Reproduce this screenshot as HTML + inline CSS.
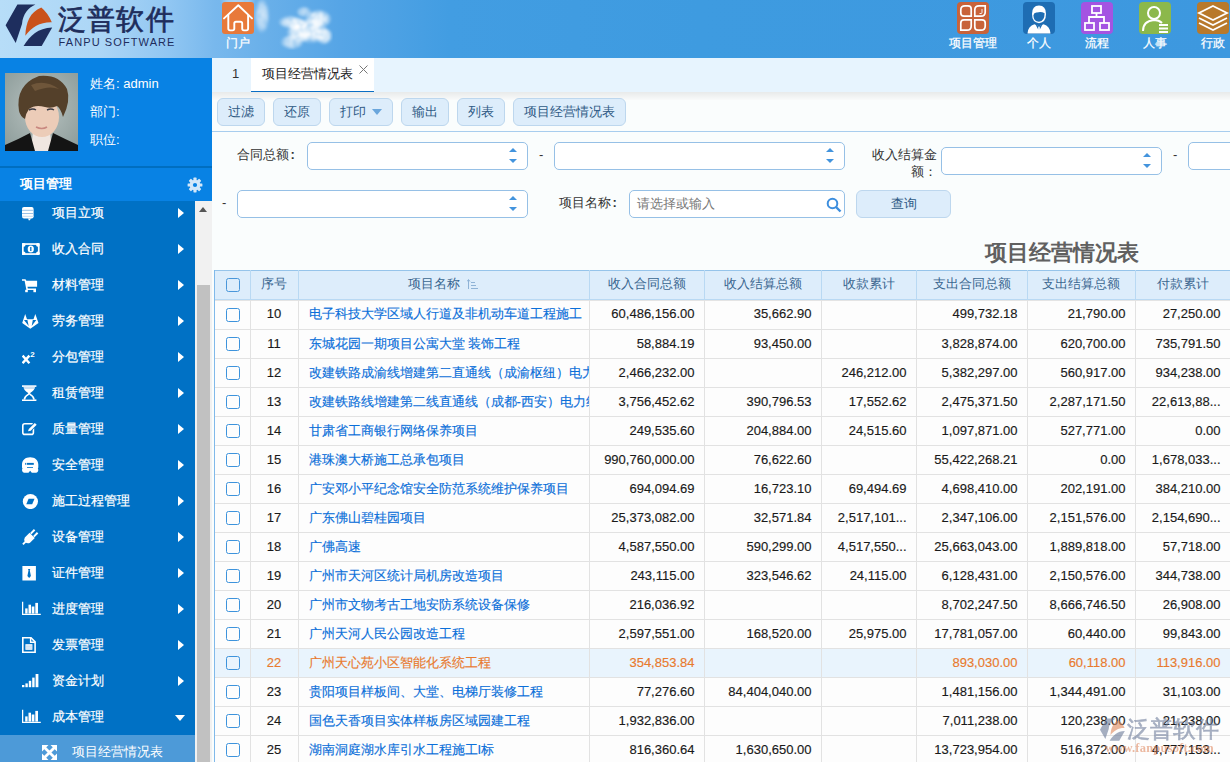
<!DOCTYPE html>
<html><head><meta charset="utf-8">
<style>
*{margin:0;padding:0;box-sizing:border-box}
html,body{width:1230px;height:762px;overflow:hidden;background:#fafdfd;font-family:"Liberation Sans",sans-serif;font-size:13px;color:#333}
.abs{position:absolute}
#hdr{position:absolute;left:0;top:0;width:1230px;height:58px;background:linear-gradient(90deg,#b7ddf8 0px,#acd6f6 100px,#90c6f2 170px,#78b8ed 215px,#68afe9 270px,#56a5e6 340px,#429de2 450px,#3e9be0 700px,#3d98df 1230px)}
.cloud{position:absolute;border-radius:50%;background:rgba(255,255,255,.55);filter:blur(4px)}
.logo-cn{position:absolute;left:58px;top:1px;font-size:28px;line-height:38px;color:#1e2d5c;letter-spacing:1.2px;font-weight:normal;-webkit-text-stroke:0.7px #1e2d5c}
.logo-en{position:absolute;left:58.5px;top:35.5px;font-size:11px;line-height:12px;color:#1e2d5c;letter-spacing:1.1px}
.hi{position:absolute;top:2px;width:32px;height:32px;border-radius:4px}
.ht{position:absolute;top:34.5px;font-size:12px;line-height:16px;color:#fff;text-align:center;width:70px;-webkit-text-stroke:0.25px #fff}
#side{position:absolute;left:0;top:58px;width:212px;height:704px;background:#0882e4}
#user{position:absolute;left:0;top:0;width:212px;height:108px;background:#0882e4}
#photo{position:absolute;left:5px;top:15px;width:73px;height:78px;background:linear-gradient(180deg,#8fa39c,#b3c1bd)}
.ui{position:absolute;left:90px;color:#fff;font-size:13px;line-height:16px}
#sep{position:absolute;left:0;top:108px;width:212px;height:2px;background:#006ec0}
#pm{position:absolute;left:0;top:110px;width:212px;height:33px;background:#0882e4;color:#fff;font-weight:bold;font-size:13px}
#menu{position:absolute;left:0;top:201px;width:195px;height:561px;background:#0071c5;overflow:hidden}
.mi{position:absolute;left:0;width:195px;height:36px;color:#fff}
.mic{position:absolute;left:22px;top:10px;width:18px;height:16px}
.mt{position:absolute;left:52px;top:10px;line-height:16px;font-size:13px;-webkit-text-stroke:0.2px #fff}
.ar{position:absolute;left:178px;top:13px;width:0;height:0;border-left:6px solid #fff;border-top:5px solid transparent;border-bottom:5px solid transparent}
.ad{position:absolute;left:175px;top:16px;width:0;height:0;border-top:6px solid #fff;border-left:5px solid transparent;border-right:5px solid transparent}
#sub{position:absolute;left:0;top:735px;width:195px;height:27px;background:#4d9ad8;color:#fff}
#sbar{position:absolute;left:195px;top:201px;width:17px;height:561px;background:#f1f1f1}
#thumb{position:absolute;left:197px;top:285px;width:13px;height:477px;background:#c1c1c1}
#tabs{position:absolute;left:212px;top:58px;width:1018px;height:34px;background:#e7f4fe}
#tab1{position:absolute;left:251px;top:58px;width:123px;height:34px;background:#fff;border-bottom:1px solid #0a6ec4}
#shadow{position:absolute;left:212px;top:92px;width:1018px;height:8px;background:linear-gradient(180deg,#e8eaea,#f9fafa)}
#tb{position:absolute;left:212px;top:92px;width:1018px;height:40px;border-bottom:1px solid #a8cdee}
.btn{position:absolute;top:98px;height:28px;background:#ddedfb;border:1px solid #bdd7ee;border-radius:6px;color:#2f5a85;font-size:13px;line-height:25px;text-align:center}
.co{font-weight:bold;margin-left:1.5px}
.lbl{position:absolute;font-size:13px;line-height:16px;color:#333}
.inp{position:absolute;height:28px;border:1px solid #96c0e6;border-radius:5px;background:#fff}
.spin{position:absolute;right:10px;top:5px;width:8px;height:16px}
.spin:before{content:"";position:absolute;left:0;top:0;border-bottom:4px solid #4394dd;border-left:4px solid transparent;border-right:4px solid transparent}
.spin:after{content:"";position:absolute;left:0;top:11px;border-top:4px solid #4394dd;border-left:4px solid transparent;border-right:4px solid transparent}
#title{position:absolute;left:985px;top:239px;font-size:22px;line-height:28px;font-weight:bold;color:#606060}
#grid{position:absolute;left:214px;top:270px;width:1030px;border-left:1px solid #80b9ea}
table{border-collapse:collapse;table-layout:fixed;width:1015px}
th{height:29px;background:#ddedfb;border-top:1px solid #96c4ea;border-right:1px solid #b9d9f3;border-bottom:1px solid #b9d9f3;font-weight:normal;color:#3a6690;font-size:13px;white-space:nowrap;overflow:hidden;padding-bottom:2px}
td{height:29px;border-right:1px solid #e2e2e2;border-bottom:1px solid #e2e2e2;white-space:nowrap;overflow:hidden;font-size:13px;color:#1a1a1a;background:#fdfdfd;-webkit-text-stroke:0.15px currentColor}
tbody tr:first-child td{height:30px;background-image:linear-gradient(#e4e4e4,#e4e4e4);background-size:100% 1px;background-repeat:no-repeat}
td.c{text-align:center;padding-bottom:2px}
td.n{text-align:right;padding-right:9px;padding-bottom:2px}
td.nm{padding-left:10px;color:#0b6fd9;padding-bottom:1px}
td.ck{text-align:center;padding-left:2px}
tr.hl td{background:#e9f4fd;color:#e87a2e}
th .cb{position:relative;left:1px;top:1px;border-color:#4a97da}
.cb{display:block;margin:0 auto;width:14px;height:14px;border:1px solid #3d93dc;border-radius:2.5px;background:transparent}
#wm{position:absolute;left:1100px;top:716px;width:125px;height:40px;opacity:.6}
</style></head><body>
<div id="hdr">
  <svg class="abs" style="left:200px;top:0" width="150" height="58" viewBox="0 0 150 58">
    <defs>
    <radialGradient id="cg"><stop offset="0" stop-color="#fff" stop-opacity="1"/><stop offset=".6" stop-color="#fff" stop-opacity=".75"/><stop offset="1" stop-color="#fff" stop-opacity="0"/></radialGradient>
    <filter id="ct" x="0" y="0" width="100%" height="100%"><feTurbulence type="fractalNoise" baseFrequency="0.15" numOctaves="3" seed="7"/><feColorMatrix values="0 0 0 0 1  0 0 0 0 1  0 0 0 0 1  0 0 0 -1.0 1.4"/><feComposite in2="SourceGraphic" operator="in"/><feGaussianBlur stdDeviation="1"/></filter>
    </defs>
    <g filter="url(#ct)">
      <ellipse cx="62" cy="16" rx="8" ry="18" fill="url(#cg)" opacity=".7"/>
      <ellipse cx="38" cy="1" rx="18" ry="5" fill="url(#cg)" opacity=".45"/>
      <ellipse cx="118" cy="19" rx="14" ry="10" fill="url(#cg)"/>
      <ellipse cx="111" cy="31" rx="17" ry="13" fill="url(#cg)"/>
      <ellipse cx="90" cy="22" rx="12" ry="7" fill="url(#cg)" opacity=".8"/>
      <ellipse cx="92" cy="42" rx="12" ry="8" fill="url(#cg)" opacity=".75"/>
      <ellipse cx="124" cy="36" rx="9" ry="9" fill="url(#cg)"/>
      <ellipse cx="100" cy="32" rx="14" ry="11" fill="url(#cg)"/>
      <ellipse cx="98" cy="25" rx="10" ry="8" fill="url(#cg)"/>
      <ellipse cx="104" cy="12" rx="8" ry="6" fill="url(#cg)" opacity=".6"/>
    </g>
  </svg>
  <svg class="abs" style="left:0;top:0" width="60" height="50" viewBox="0 0 60 50">
    <path d="M17.4 4.6H35.4C28 8 23 14 22 24L15.7 43L5.6 25.3Z" fill="#1e2e5e"/>
    <path d="M25.3 35.8C26 22 30 12 41.3 7.5Q48 13 51.8 22.3C40 22 32 27 25.3 35.8Z" fill="#c9521c"/>
    <path d="M23.6 46C30 36 38 28 52.2 27.6L41.7 46Z" fill="#1e2e5e"/>
  </svg>
  <div class="logo-cn">泛普软件</div>
  <div class="logo-en">FANPU SOFTWARE</div>
  <div class="hi" style="left:222px;background:#e8793a;border-radius:3px"><svg width="32" height="32" viewBox="0 0 32 32"><path d="M2 16.4L16.3 3.2L30 16.4" fill="none" stroke="#fff" stroke-width="1.9" stroke-linecap="round" stroke-linejoin="round"/><path d="M6.3 12.5V26.6Q6.3 28.4 8.1 28.4H10.5Q12.3 28.4 12.3 26.6V21.5Q12.3 19.8 14 19.8H18.5Q20.2 19.8 20.2 21.5V26.6Q20.2 28.4 22 28.4H24.3Q26.1 28.4 26.1 26.6V12.5" fill="none" stroke="#fff" stroke-width="1.9" stroke-linejoin="round"/></svg></div>
  <div class="ht" style="left:203px;font-size:11.5px;top:35px">门户</div>

  <div class="hi" style="left:957px;background:#c8633a"><svg width="32" height="32" viewBox="0 0 32 32"><g fill="none" stroke="#fff" stroke-width="1.7"><path d="M8 3.8H11Q14.2 3.8 14.2 7V14.2H7Q3.8 14.2 3.8 11V8Q3.8 3.8 8 3.8Z"/><path d="M17.8 14.2V8Q17.8 3.8 22 3.8H28.2V10Q28.2 14.2 24 14.2Z"/><path d="M3.8 28.2V21Q3.8 17.8 7 17.8H14.2V24Q14.2 28.2 10 28.2Z"/><path d="M17.8 17.8H25Q28.2 17.8 28.2 21V24Q28.2 28.2 24 28.2H21Q17.8 28.2 17.8 25Z"/></g><path d="M25 7V10.5Q25 11.5 24 11.5H22.5" fill="none" stroke="#fff" stroke-width="0.9"/></svg></div>
  <div class="ht" style="left:938px">项目管理</div>
  <div class="hi" style="left:1023px;background:#1e6db3"><svg width="32" height="32" viewBox="0 0 32 32"><path d="M9 12Q9 3.5 16 3.5Q23 3.5 23 12Q23 20.5 16 21.2Q9 20.5 9 12Z" fill="#fff"/><path d="M10.4 13.2Q11 10.2 14 10.6Q18 9.2 21.6 11.2Q21.6 19.2 16 19.8Q10.4 19.2 10.4 13.2Z" fill="#1e6db3"/><path d="M4.5 31.5Q5 24 11.5 22.3L16 24.5L20.5 22.3Q27 24 27.5 31.5Z" fill="#fff"/><path d="M12.5 22.6L16 29L19.5 22.6L16 24.6Z" fill="#1e6db3"/><path d="M15.3 24.8H16.7L17 28.8L16 30.2L15 28.8Z" fill="#fff"/></svg></div>
  <div class="ht" style="left:1004px">个人</div>
  <div class="hi" style="left:1081px;background:#a454e2"><svg width="32" height="32" viewBox="0 0 32 32"><rect x="11" y="4" width="9" height="7" fill="none" stroke="#fff" stroke-width="1.8"/><path d="M15.5 11V15M8 21V15H23V21" fill="none" stroke="#fff" stroke-width="1.8"/><rect x="4" y="21" width="9" height="7" fill="none" stroke="#fff" stroke-width="1.8"/><rect x="19" y="21" width="9" height="7" fill="none" stroke="#fff" stroke-width="1.8"/></svg></div>
  <div class="ht" style="left:1062px">流程</div>
  <div class="hi" style="left:1139px;background:#8cb84b"><svg width="32" height="32" viewBox="0 0 32 32"><circle cx="15" cy="11" r="6" fill="none" stroke="#fff" stroke-width="2"/><path d="M4 29Q4 19 15 18Q20 18 23 21" fill="none" stroke="#fff" stroke-width="2"/><rect x="20" y="22" width="9" height="2" fill="#fff"/><rect x="20" y="25.5" width="9" height="2" fill="#fff"/><rect x="20" y="29" width="9" height="2" fill="#fff"/></svg></div>
  <div class="ht" style="left:1120px">人事</div>
  <div class="hi" style="left:1197px;background:#b8792b"><svg width="32" height="32" viewBox="0 0 32 32"><path d="M16 4L30 11L16 18L2 11Z" fill="none" stroke="#fff" stroke-width="1.8"/><path d="M2 16L16 23L30 16M2 21L16 28L30 21" fill="none" stroke="#fff" stroke-width="1.8"/></svg></div>
  <div class="ht" style="left:1178px">行政</div>
</div>

<div id="side">
  <div id="user">
    <div id="photo">
      <svg width="73" height="78" viewBox="0 0 73 78">
        <defs><radialGradient id="pbg" cx="0.5" cy="0.45" r="0.7"><stop offset="0" stop-color="#b9c3c1"/><stop offset="1" stop-color="#8d9c9a"/></radialGradient></defs>
        <rect width="73" height="78" fill="url(#pbg)"/>
        <path d="M28 58Q36 62 45 58L47 78H26Z" fill="#f0e6e0"/>
        <ellipse cx="37" cy="44" rx="17" ry="20" fill="#ecccb8"/>
        <path d="M0 78V72Q14 66 25 60L30 78ZM73 78V72Q60 66 48 60L43 78Z" fill="#141414"/>
        <path d="M14 38Q10 12 34 3Q54 1 62 16Q66 28 58 44Q56 36 52 33Q46 36 40 34Q30 31 24 36Q21 40 20 46Q15 43 14 38Z" fill="#54402a"/><path d="M26 12Q40 6 54 16Q44 12 30 18Z" fill="#7a6042" opacity=".7"/>
        <path d="M24 37q4-2 7 0M42 37q4-2 7 0" stroke="#3a3a44" stroke-width="1.4" fill="none"/>
        <path d="M31 54q6 3 11 0" stroke="#c88880" stroke-width="1.6" fill="none"/>
      </svg>
    </div>
    <div class="ui" style="top:18px">姓名: admin</div>
    <div class="ui" style="top:46px">部门:</div>
    <div class="ui" style="top:74px">职位:</div>
  </div>
  <div id="sep"></div>
  <div id="pm"><span class="abs" style="left:20px;top:8px;line-height:16px">项目管理</span>
    <svg class="abs" style="left:186.5px;top:8.5px" width="16" height="16" viewBox="0 0 16 16"><g fill="#d3e7f9"><circle cx="8" cy="8" r="5.3"/><rect x="6.4" y="0.6" width="3.2" height="3.4" rx=".6"/><rect x="6.4" y="12" width="3.2" height="3.4" rx=".6"/><rect x="0.6" y="6.4" width="3.4" height="3.2" rx=".6"/><rect x="12" y="6.4" width="3.4" height="3.2" rx=".6"/><rect x="6.4" y="0.6" width="3.2" height="3.4" rx=".6" transform="rotate(45 8 8)"/><rect x="6.4" y="12" width="3.2" height="3.4" rx=".6" transform="rotate(45 8 8)"/><rect x="0.6" y="6.4" width="3.4" height="3.2" rx=".6" transform="rotate(45 8 8)"/><rect x="12" y="6.4" width="3.4" height="3.2" rx=".6" transform="rotate(45 8 8)"/></g><circle cx="8" cy="8" r="2.1" fill="#0882e4"/></svg>
  </div>
</div>
<div id="menu">
<div class="mi" style="top:-6px"><span class="mic"><svg width="19" height="16" viewBox="0 0 19 16"><rect x="0" y="2" width="11.6" height="11.6" rx="2" fill="#fff"/><path d="M0 5.3h11.6M0 8.5h11.6" stroke="#9cc2e6" stroke-width="1"/><path d="M0 11.3h11.6" stroke="#c9ddf0" stroke-width="1"/><path d="M6 13.4H9.3L7 15.8Z" fill="#fff"/></svg></span><span class="mt">项目立项</span><i class="ar"></i></div>
<div class="mi" style="top:30px"><span class="mic"><svg width="19" height="16" viewBox="0 0 19 16"><rect x="0" y="2.2" width="17.6" height="11.7" fill="#fff"/><rect x="1.7" y="3.9" width="14.2" height="8.3" fill="#0071c5"/><circle cx="1.7" cy="3.9" r="1.8" fill="#fff"/><circle cx="15.9" cy="3.9" r="1.8" fill="#fff"/><circle cx="1.7" cy="12.2" r="1.8" fill="#fff"/><circle cx="15.9" cy="12.2" r="1.8" fill="#fff"/><ellipse cx="8.8" cy="8" rx="3.1" ry="3.6" fill="#fff"/><path d="M8.8 6v4" stroke="#0071c5" stroke-width="1.3"/></svg></span><span class="mt">收入合同</span><i class="ar"></i></div>
<div class="mi" style="top:66px"><span class="mic"><svg width="19" height="16" viewBox="0 0 19 16"><path d="M0 2.2H3.5L4.4 3.7H15.1V9.8H5.5L5.8 11.4H14V13H4.4L2.6 3.8H0Z" fill="#fff"/><rect x="3.2" y="12.8" width="2.6" height="2.4" fill="#fff"/><rect x="11.4" y="12.8" width="2.6" height="2.4" fill="#fff"/></svg></span><span class="mt">材料管理</span><i class="ar"></i></div>
<div class="mi" style="top:102px"><span class="mic"><svg width="19" height="16" viewBox="0 0 19 16"><path d="M3.2 1L5 6.3H11.5L13.3 1L16.5 10L8.3 15.8L0.2 10Z" fill="#fff"/><path d="M2 7.1H5.4L6.7 13.1ZM14.3 7.1H10.8L9.7 13.1Z" fill="#0071c5"/></svg></span><span class="mt">劳务管理</span><i class="ar"></i></div>
<div class="mi" style="top:138px"><span class="mic"><svg width="19" height="16" viewBox="0 0 19 16"><path d="M0.6 6.6L7.4 14.2M7.4 6.6L0.6 14.2" stroke="#fff" stroke-width="2.4"/><text x="8.2" y="8.4" font-family="Liberation Sans" font-weight="bold" font-size="8" fill="#fff">2</text></svg></span><span class="mt">分包管理</span><i class="ar"></i></div>
<div class="mi" style="top:174px"><span class="mic"><svg width="19" height="16" viewBox="0 0 19 16"><rect x="0" y="0.3" width="14.4" height="1.6" fill="#fff"/><rect x="0" y="14.4" width="14.4" height="1.6" fill="#fff"/><path d="M1.6 1.9C1.6 5.5 5.5 7 6.3 8.2C5.5 9.4 1.6 10.8 1.6 14.4H12.8C12.8 10.8 8.9 9.4 8.1 8.2C8.9 7 12.8 5.5 12.8 1.9Z" fill="#fff"/><path d="M3.3 14.4C3.6 11.5 6.2 10.6 7.2 9.4C8.2 10.6 10.8 11.5 11.1 14.4Z" fill="#0071c5"/><path d="M2 3H12.4" stroke="#a8cbec" stroke-width="1.2"/></svg></span><span class="mt">租赁管理</span><i class="ar"></i></div>
<div class="mi" style="top:210px"><span class="mic"><svg width="19" height="16" viewBox="0 0 19 16"><rect x="0.8" y="2.8" width="10.6" height="10.6" rx="2" fill="none" stroke="#fff" stroke-width="1.6"/><path d="M5 11L6 7.6L12.8 0.8L15.8 3.8L9 10.6Z" fill="#0071c5"/><path d="M6 10.2L6.8 7.9L12.8 1.9L14.7 3.8L8.7 9.8Z" fill="#fff"/></svg></span><span class="mt">质量管理</span><i class="ar"></i></div>
<div class="mi" style="top:246px"><span class="mic"><svg width="19" height="16" viewBox="0 0 19 16"><path d="M8.15 0.2C3.5 0.2 0 3 0 7.5V10Q0 11 0.5 11.5Q0 12 0 13C0 15 1.5 15.8 3.5 15.8H6.5L8.15 13.8L9.8 15.8H12.8C14.8 15.8 16.3 15 16.3 13Q16.3 12 15.8 11.5Q16.3 11 16.3 10V7.5C16.3 3 12.8 0.2 8.15 0.2Z" fill="#fff"/><rect x="3.2" y="5.9" width="1.1" height="1.9" fill="#0071c5"/><rect x="5" y="5.9" width="6.8" height="1.9" fill="#0071c5"/><rect x="5" y="10" width="6" height="0.8" fill="#0071c5"/></svg></span><span class="mt">安全管理</span><i class="ar"></i></div>
<div class="mi" style="top:282px"><span class="mic"><svg width="19" height="16" viewBox="0 0 19 16"><circle cx="8.4" cy="8.5" r="7.6" fill="#fff"/><path d="M4.3 11.2L6.6 5.8H12.5L10.2 11.2Z" fill="#0071c5"/></svg></span><span class="mt">施工过程管理</span><i class="ar"></i></div>
<div class="mi" style="top:318px"><span class="mic"><svg width="19" height="16" viewBox="0 0 19 16"><path d="M0.9 15.3L4.6 11.6" stroke="#fff" stroke-width="1.9"/><path d="M2.8 8.6L7.6 3.8L12.8 9L8 13.8Q5.2 15.2 3 12.7Q1.6 10.6 2.8 8.6Z" fill="#fff"/><path d="M8.8 4.6L12.6 0.8M11.8 7.6L15.6 3.8" stroke="#fff" stroke-width="2"/></svg></span><span class="mt">设备管理</span><i class="ar"></i></div>
<div class="mi" style="top:354px"><span class="mic"><svg width="19" height="16" viewBox="0 0 19 16"><rect x="0.4" y="1" width="13.5" height="14.5" fill="#fff"/><path d="M6 4H8.3L7.8 5.6L8.9 11L7.15 13L5.4 11L6.5 5.6Z" fill="#0071c5"/></svg></span><span class="mt">证件管理</span><i class="ar"></i></div>
<div class="mi" style="top:390px"><span class="mic"><svg width="19" height="16" viewBox="0 0 19 16"><path d="M0.6 0.8V13.4H18.8" fill="none" stroke="#fff" stroke-width="1.3"/><rect x="3.2" y="7.4" width="2.4" height="5.2" fill="#fff"/><rect x="6.5" y="3.7" width="2.5" height="8.9" fill="#fff"/><rect x="9.7" y="5.5" width="2.7" height="7.1" fill="#fff"/><rect x="13.3" y="1.9" width="2.7" height="10.7" fill="#fff"/></svg></span><span class="mt">进度管理</span><i class="ar"></i></div>
<div class="mi" style="top:426px"><span class="mic"><svg width="19" height="16" viewBox="0 0 19 16"><path d="M0.8 0.8H9L13.1 4.9V15.2H0.8Z" fill="none" stroke="#fff" stroke-width="1.6"/><path d="M8.6 0.8V5.3H13.1" fill="none" stroke="#fff" stroke-width="1.4"/><rect x="3.4" y="7.2" width="7" height="5.6" fill="#fff"/><path d="M3.4 9.1h7M3.4 11h7" stroke="#9cc2e6" stroke-width="0.8"/></svg></span><span class="mt">发票管理</span><i class="ar"></i></div>
<div class="mi" style="top:462px"><span class="mic"><svg width="19" height="16" viewBox="0 0 19 16"><rect x="0" y="12" width="2.4" height="2.2" fill="#fff"/><rect x="3.4" y="10.4" width="2.4" height="3.8" fill="#fff"/><rect x="6.8" y="7.8" width="2.4" height="6.4" fill="#fff"/><rect x="10.2" y="4.6" width="2.4" height="9.6" fill="#fff"/><rect x="13.6" y="1" width="2.8" height="13.2" fill="#fff"/></svg></span><span class="mt">资金计划</span><i class="ar"></i></div>
<div class="mi" style="top:498px"><span class="mic"><svg width="19" height="16" viewBox="0 0 19 16"><path d="M0.6 0.8V13.4H18.8" fill="none" stroke="#fff" stroke-width="1.3"/><rect x="3.2" y="7.4" width="2.4" height="5.2" fill="#fff"/><rect x="6.5" y="3.7" width="2.5" height="8.9" fill="#fff"/><rect x="9.7" y="5.5" width="2.7" height="7.1" fill="#fff"/><rect x="13.3" y="1.9" width="2.7" height="10.7" fill="#fff"/></svg></span><span class="mt">成本管理</span><i class="ad"></i></div>
</div>
<div id="sub"><svg class="abs" style="left:42px;top:10px" width="15" height="15" viewBox="0 0 15 15"><path d="M0 0H6.5L0 6.5ZM15 0V6.5L8.5 0ZM0 15V8.5L6.5 15ZM15 15H8.5L15 8.5Z" fill="#fff"/><path d="M2.5 2.5L12.5 12.5M12.5 2.5L2.5 12.5" stroke="#fff" stroke-width="2.8"/></svg><span class="abs" style="left:72px;top:9px;line-height:16px">项目经营情况表</span></div>
<div id="sbar"><i class="abs" style="left:4px;top:6px;border-bottom:5px solid #555;border-left:4.5px solid transparent;border-right:4.5px solid transparent"></i></div>
<div id="thumb"></div>

<div id="tabs"></div>
<div id="shadow"></div>
<div class="abs" style="left:232px;top:66px;line-height:16px;color:#333">1</div>
<div id="tab1"><span class="abs" style="left:11px;top:8px;line-height:16px;color:#222">项目经营情况表</span>
<svg class="abs" style="left:108px;top:7px" width="9" height="9" viewBox="0 0 9 9"><path d="M0.5 0.5L8.5 8.5M8.5 0.5L0.5 8.5" stroke="#777" stroke-width="1"/></svg></div>
<div id="tb"></div>
<div class="btn" style="left:217px;width:48px">过滤</div>
<div class="btn" style="left:273px;width:48px">还原</div>
<div class="btn" style="left:329px;width:64px;text-align:left;padding-left:10px">打印<i class="abs" style="left:41.5px;top:10px;border-top:6px solid #6aa6dc;border-left:5px solid transparent;border-right:5px solid transparent"></i></div>
<div class="btn" style="left:401px;width:48px">输出</div>
<div class="btn" style="left:457px;width:48px">列表</div>
<div class="btn" style="left:513px;width:113px">项目经营情况表</div>

<div class="lbl" style="left:237px;top:147px">合同总额<b class="co">:</b></div>
<div class="inp" style="left:307px;top:142px;width:221px"><i class="spin"></i></div>
<div class="lbl" style="left:539px;top:147px">-</div>
<div class="inp" style="left:554px;top:142px;width:291px"><i class="spin"></i></div>
<div class="lbl" style="left:871px;top:146px;width:66px;text-align:right;line-height:17px">收入结算金<br>额：</div>
<div class="inp" style="left:941px;top:147px;width:221px"><i class="spin"></i></div>
<div class="lbl" style="left:1173px;top:147px">-</div>
<div class="inp" style="left:1188px;top:142px;width:80px"></div>

<div class="lbl" style="left:222px;top:195px">-</div>
<div class="inp" style="left:237px;top:190px;width:291px"><i class="spin"></i></div>
<div class="lbl" style="left:559px;top:195px">项目名称<b class="co">:</b></div>
<div class="inp" style="left:629px;top:190px;width:216px"><span class="abs" style="left:7px;top:5px;line-height:16px;color:#777">请选择或输入</span>
<svg class="abs" style="left:196px;top:6px" width="16" height="16" viewBox="0 0 16 16"><circle cx="6.5" cy="6.5" r="4.8" fill="none" stroke="#3d8ede" stroke-width="2"/><path d="M10 10L14.5 14.5" stroke="#3d8ede" stroke-width="2.4"/></svg></div>
<div class="btn" style="left:856px;top:190px;width:95px;height:28px">查询</div>

<div id="title">项目经营情况表</div>

<div id="grid">
<table>
<colgroup><col style="width:35px"><col style="width:48px"><col style="width:291px"><col style="width:115px"><col style="width:117px"><col style="width:95px"><col style="width:111px"><col style="width:108px"><col style="width:95px"></colgroup>
<thead><tr><th><i class="cb"></i></th><th>序号</th><th>项目名称 <svg width="12" height="10" viewBox="0 0 12 10" style="vertical-align:-1px;margin-left:3px"><path d="M1.5 10V1M0 2.5L1.5 0.5L3 2.5" stroke="#8fb3d6" stroke-width="1" fill="none"/><path d="M4 3.5h4M4 6.5h5M4 9.5h7" stroke="#8fb3d6" stroke-width="1"/></svg></th><th>收入合同总额</th><th>收入结算总额</th><th>收款累计</th><th>支出合同总额</th><th>支出结算总额</th><th>付款累计</th></tr></thead>
<tbody>
<tr><td class="ck"><i class="cb"></i></td><td class="c">10</td><td class="nm"><span>电子科技大学区域人行道及非机动车道工程施工</span></td><td class="n">60,486,156.00</td><td class="n">35,662.90</td><td class="n"></td><td class="n">499,732.18</td><td class="n">21,790.00</td><td class="n">27,250.00</td></tr>
<tr><td class="ck"><i class="cb"></i></td><td class="c">11</td><td class="nm"><span>东城花园一期项目公寓大堂 装饰工程</span></td><td class="n">58,884.19</td><td class="n">93,450.00</td><td class="n"></td><td class="n">3,828,874.00</td><td class="n">620,700.00</td><td class="n">735,791.50</td></tr>
<tr><td class="ck"><i class="cb"></i></td><td class="c">12</td><td class="nm"><span>改建铁路成渝线增建第二直通线（成渝枢纽）电力线路工程</span></td><td class="n">2,466,232.00</td><td class="n"></td><td class="n">246,212.00</td><td class="n">5,382,297.00</td><td class="n">560,917.00</td><td class="n">934,238.00</td></tr>
<tr><td class="ck"><i class="cb"></i></td><td class="c">13</td><td class="nm"><span>改建铁路线增建第二线直通线（成都-西安）电力线路工程</span></td><td class="n">3,756,452.62</td><td class="n">390,796.53</td><td class="n">17,552.62</td><td class="n">2,475,371.50</td><td class="n">2,287,171.50</td><td class="n">22,613,88...</td></tr>
<tr><td class="ck"><i class="cb"></i></td><td class="c">14</td><td class="nm"><span>甘肃省工商银行网络保养项目</span></td><td class="n">249,535.60</td><td class="n">204,884.00</td><td class="n">24,515.60</td><td class="n">1,097,871.00</td><td class="n">527,771.00</td><td class="n">0.00</td></tr>
<tr><td class="ck"><i class="cb"></i></td><td class="c">15</td><td class="nm"><span>港珠澳大桥施工总承包项目</span></td><td class="n">990,760,000.00</td><td class="n">76,622.60</td><td class="n"></td><td class="n">55,422,268.21</td><td class="n">0.00</td><td class="n">1,678,033...</td></tr>
<tr><td class="ck"><i class="cb"></i></td><td class="c">16</td><td class="nm"><span>广安邓小平纪念馆安全防范系统维护保养项目</span></td><td class="n">694,094.69</td><td class="n">16,723.10</td><td class="n">69,494.69</td><td class="n">4,698,410.00</td><td class="n">202,191.00</td><td class="n">384,210.00</td></tr>
<tr><td class="ck"><i class="cb"></i></td><td class="c">17</td><td class="nm"><span>广东佛山碧桂园项目</span></td><td class="n">25,373,082.00</td><td class="n">32,571.84</td><td class="n">2,517,101...</td><td class="n">2,347,106.00</td><td class="n">2,151,576.00</td><td class="n">2,154,690...</td></tr>
<tr><td class="ck"><i class="cb"></i></td><td class="c">18</td><td class="nm"><span>广佛高速</span></td><td class="n">4,587,550.00</td><td class="n">590,299.00</td><td class="n">4,517,550...</td><td class="n">25,663,043.00</td><td class="n">1,889,818.00</td><td class="n">57,718.00</td></tr>
<tr><td class="ck"><i class="cb"></i></td><td class="c">19</td><td class="nm"><span>广州市天河区统计局机房改造项目</span></td><td class="n">243,115.00</td><td class="n">323,546.62</td><td class="n">24,115.00</td><td class="n">6,128,431.00</td><td class="n">2,150,576.00</td><td class="n">344,738.00</td></tr>
<tr><td class="ck"><i class="cb"></i></td><td class="c">20</td><td class="nm"><span>广州市文物考古工地安防系统设备保修</span></td><td class="n">216,036.92</td><td class="n"></td><td class="n"></td><td class="n">8,702,247.50</td><td class="n">8,666,746.50</td><td class="n">26,908.00</td></tr>
<tr><td class="ck"><i class="cb"></i></td><td class="c">21</td><td class="nm"><span>广州天河人民公园改造工程</span></td><td class="n">2,597,551.00</td><td class="n">168,520.00</td><td class="n">25,975.00</td><td class="n">17,781,057.00</td><td class="n">60,440.00</td><td class="n">99,843.00</td></tr>
<tr class="hl"><td class="ck"><i class="cb"></i></td><td class="c">22</td><td class="nm"><span>广州天心苑小区智能化系统工程</span></td><td class="n">354,853.84</td><td class="n"></td><td class="n"></td><td class="n">893,030.00</td><td class="n">60,118.00</td><td class="n">113,916.00</td></tr>
<tr><td class="ck"><i class="cb"></i></td><td class="c">23</td><td class="nm"><span>贵阳项目样板间、大堂、电梯厅装修工程</span></td><td class="n">77,276.60</td><td class="n">84,404,040.00</td><td class="n"></td><td class="n">1,481,156.00</td><td class="n">1,344,491.00</td><td class="n">31,103.00</td></tr>
<tr><td class="ck"><i class="cb"></i></td><td class="c">24</td><td class="nm"><span>国色天香项目实体样板房区域园建工程</span></td><td class="n">1,932,836.00</td><td class="n"></td><td class="n"></td><td class="n">7,011,238.00</td><td class="n">120,238.00</td><td class="n">21,238.00</td></tr>
<tr><td class="ck"><i class="cb"></i></td><td class="c">25</td><td class="nm"><span>湖南洞庭湖水库引水工程施工I标</span></td><td class="n">816,360.64</td><td class="n">1,630,650.00</td><td class="n"></td><td class="n">13,723,954.00</td><td class="n">516,372.00</td><td class="n">4,777,153...</td></tr>
</tbody>
</table>
</div>

<div id="wm">
  <svg class="abs" style="left:-3px;top:0" width="32" height="27" viewBox="0 0 60 50">
    <path d="M17.4 4.6H35.4C28 8 23 14 22 24L15.7 43L5.6 25.3Z" fill="#6b7a99"/>
    <path d="M25.3 35.8C26 22 30 12 41.3 7.5Q48 13 51.8 22.3C40 22 32 27 25.3 35.8Z" fill="#e0885a"/>
    <path d="M23.6 46C30 36 38 28 52.2 27.6L41.7 46Z" fill="#6b7a99"/>
  </svg>
  <div class="abs" style="left:27px;top:0;font-size:23px;line-height:26px;color:#6b7a99;-webkit-text-stroke:0.6px #6b7a99">泛普软件</div>
  <div class="abs" style="left:5px;top:25px;font-family:'Liberation Serif',serif;font-size:12.5px;line-height:14px;color:#e08a62;letter-spacing:0.2px;font-weight:bold">www.fanpusoft.com</div>
</div>
</body></html>
